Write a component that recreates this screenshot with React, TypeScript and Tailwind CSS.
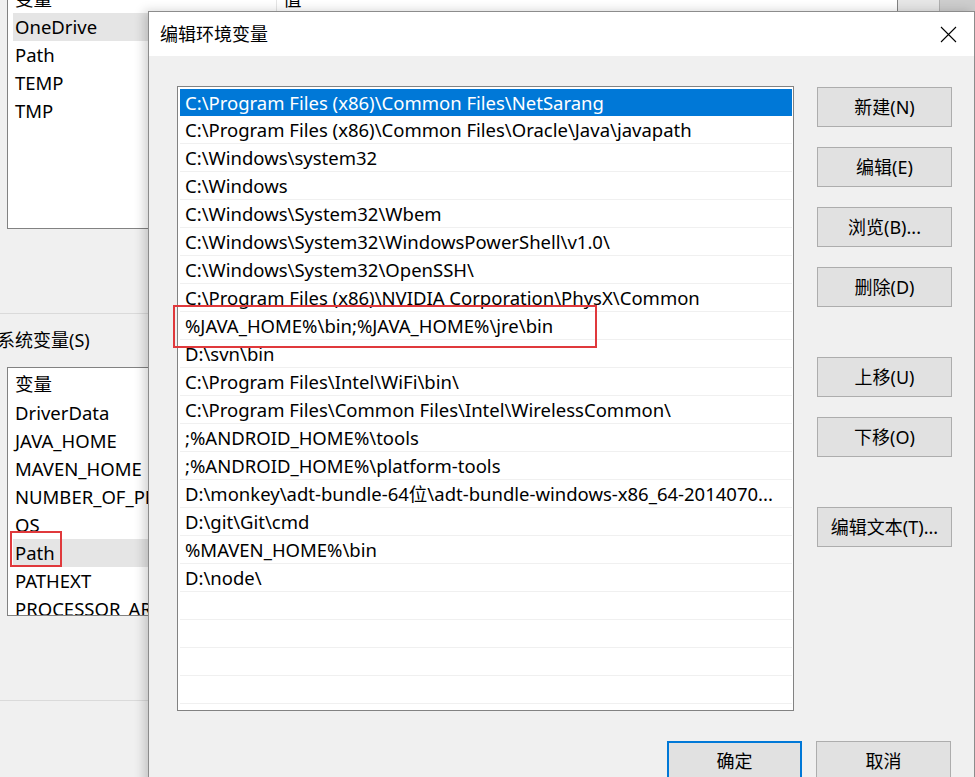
import React from "react";

const userVars = ["OneDrive", "Path", "TEMP", "TMP"];

const sysVars = [
  "DriverData",
  "JAVA_HOME",
  "MAVEN_HOME",
  "NUMBER_OF_PROCESSORS",
  "OS",
  "Path",
  "PATHEXT",
  "PROCESSOR_ARCHITECTURE",
];

const paths = [
  "C:\\Program Files (x86)\\Common Files\\NetSarang",
  "C:\\Program Files (x86)\\Common Files\\Oracle\\Java\\javapath",
  "C:\\Windows\\system32",
  "C:\\Windows",
  "C:\\Windows\\System32\\Wbem",
  "C:\\Windows\\System32\\WindowsPowerShell\\v1.0\\",
  "C:\\Windows\\System32\\OpenSSH\\",
  "C:\\Program Files (x86)\\NVIDIA Corporation\\PhysX\\Common",
  "%JAVA_HOME%\\bin;%JAVA_HOME%\\jre\\bin",
  "D:\\svn\\bin",
  "C:\\Program Files\\Intel\\WiFi\\bin\\",
  "C:\\Program Files\\Common Files\\Intel\\WirelessCommon\\",
  ";%ANDROID_HOME%\\tools",
  ";%ANDROID_HOME%\\platform-tools",
  "D:\\monkey\\adt-bundle-64位\\adt-bundle-windows-x86_64-2014070...",
  "D:\\git\\Git\\cmd",
  "%MAVEN_HOME%\\bin",
  "D:\\node\\",
  "",
  "",
  "",
  "",
];

function Btn({ label, primary }: { label: string; primary?: boolean }) {
  return (
    <button
      className={`w-[135px] h-[40px] flex items-center justify-center bg-[#e1e1e1] text-[18px] text-black ${
        primary ? "border-2 border-[#0078d7]" : "border border-[#adadad]"
      }`}
    >
      {label}
    </button>
  );
}

export default function App() {
  return (
    <div
      className="relative w-[975px] h-[777px] overflow-hidden bg-[#f0f0f0] text-black"
      style={{ fontFamily: '"Noto Sans", "Noto Sans CJK SC", sans-serif' }}
    >
      {/* background window: 环境变量 */}
      <div className="flex flex-col">
        <div className="flex">
          <div className="ml-[7px] mt-[-17px] w-[891px] h-[246px] border border-[#828282] bg-white flex flex-col text-[18.5px]">
            <div className="h-[29px] flex items-center">
              <div className="w-[269px] h-full pl-[7px] flex items-center border-r border-[#e5e5e5]">变量</div>
              <div className="pl-[6px]">值</div>
            </div>
            {userVars.map((v, i) => (
              <div
                key={v}
                className={`h-[28px] ml-[5px] pl-[2px] flex items-center ${i === 0 ? "bg-[#e5e5e5]" : ""}`}
              >
                {v}
              </div>
            ))}
          </div>
          <div className="flex-1 h-[12px] flex">
            <div className="w-[42px] bg-[#e6e6e6] border-r border-[#b0b0b0]" />
            <div className="flex-1 bg-[#cdcdcd]" />
          </div>
        </div>

        <div className="mt-[84px] h-px bg-[#dadada] w-[160px]" />
        <div className="h-[53px] flex items-center ml-[-3px] text-[18px]">系统变量(S)</div>

        <div className="ml-[7px] w-[300px] h-[249px] border border-[#828282] bg-white overflow-hidden text-[18.5px]">
          <div className="h-[31px] pl-[7px] flex items-center">变量</div>
          {sysVars.map((v) => (
            <div
              key={v}
              className={`h-[28px] ml-[5px] pl-[2px] flex items-center whitespace-nowrap ${
                v === "Path" ? "bg-[#e5e5e5]" : ""
              }`}
            >
              {v}
            </div>
          ))}
        </div>

        <div className="mt-[84px] h-px bg-[#dadada] w-[160px]" />
      </div>

      {/* annotation on background list */}
      <div className="absolute left-[10px] top-[531px] w-[52px] h-[36px] border-2 border-[#e0393c]" />

      {/* dialog: 编辑环境变量 */}
      <div className="absolute left-[148px] top-[11px] w-[827px] h-[790px] border border-[#8c8c8c] bg-[#f0f0f0] flex flex-col shadow-[-4px_0_10px_rgba(0,0,0,0.18)]">
        <div className="h-[44px] bg-white flex items-center justify-between pl-[11px] pr-[17px]">
          <span className="text-[18px]">编辑环境变量</span>
          <svg width="17" height="17" viewBox="0 0 17 17" fill="none" stroke="#000" strokeWidth="1.1">
            <path d="M1 1L16 16M16 1L1 16" />
          </svg>
        </div>

        <div className="flex pl-[28px] pt-[30px]">
          <div className="w-[617px] h-[625px] border border-[#828282] bg-white pt-[1px] overflow-hidden text-[18.5px]">
            {paths.map((p, i) => (
              <div key={i} className="h-[28px] pl-[2px] pr-[1px] flex items-stretch">
                <div
                  className={`flex-1 flex items-center pl-[5px] whitespace-nowrap overflow-hidden ${
                    i === 0 ? "bg-[#0078d7] text-white mt-[1px]" : "border-b border-[#f0f0f0]"
                  }`}
                >
                  {p}
                </div>
              </div>
            ))}
          </div>

          <div className="ml-[23px] pt-[1px] flex flex-col">
            <Btn label="新建(N)" />
            <div className="mt-[20px]"><Btn label="编辑(E)" /></div>
            <div className="mt-[20px]"><Btn label="浏览(B)..." /></div>
            <div className="mt-[20px]"><Btn label="删除(D)" /></div>
            <div className="mt-[50px]"><Btn label="上移(U)" /></div>
            <div className="mt-[20px]"><Btn label="下移(O)" /></div>
            <div className="mt-[50px]"><Btn label="编辑文本(T)..." /></div>
          </div>
        </div>

        <div className="flex justify-end gap-[14px] pr-[23px] mt-[30px]">
          <Btn label="确定" primary />
          <Btn label="取消" />
        </div>
      </div>

      {/* annotation on dialog list */}
      <div className="absolute left-[173px] top-[305px] w-[424px] h-[43px] border-2 border-[#e0393c]" />
    </div>
  );
}
